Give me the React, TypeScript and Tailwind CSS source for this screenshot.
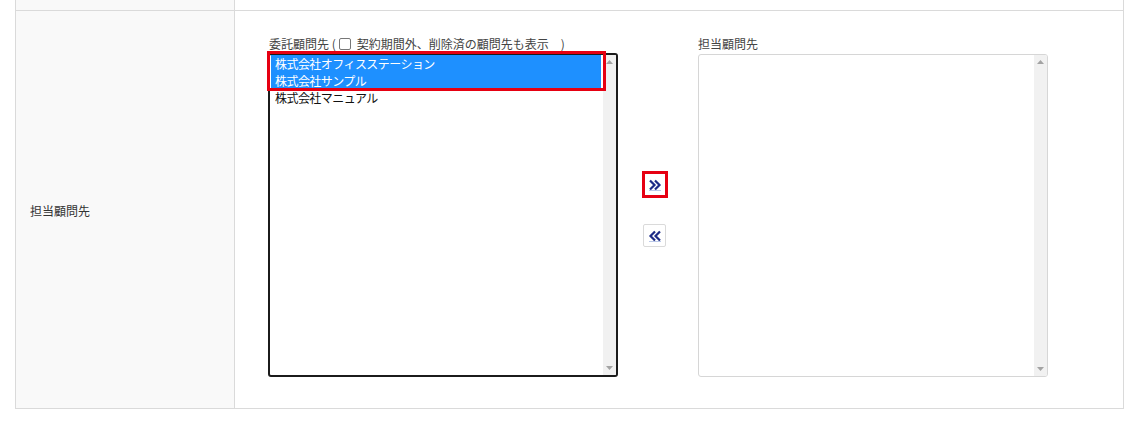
import { useState } from 'react';

const FONT = { fontFamily: '"Noto Sans CJK JP", "Noto Sans", sans-serif' };

interface Client {
  id: number;
  name: string;
}

const sourceClients: Client[] = [
  { id: 1, name: '株式会社オフィスステーション' },
  { id: 2, name: '株式会社サンプル' },
  { id: 3, name: '株式会社マニュアル' },
];

const ScrollTrack = () => (
  <div className="flex w-[13px] shrink-0 flex-col items-center justify-between bg-[#f1f1f1] py-[5px]">
    <svg width="7" height="4" viewBox="0 0 7 4">
      <path d="M0 4 L3.5 0 L7 4 Z" fill="#a3a3a3" />
    </svg>
    <svg width="7" height="4" viewBox="0 0 7 4">
      <path d="M0 0 L3.5 4 L7 0 Z" fill="#a3a3a3" />
    </svg>
  </div>
);

const Chevrons = ({ dir }: { dir: 'right' | 'left' }) => (
  <svg width="14" height="12" viewBox="0 0 14 12">
    {dir === 'right' ? (
      <path
        d="M2 1.5 L6.5 6 L2 10.5 M7 1.5 L11.5 6 L7 10.5"
        fill="none"
        stroke="#1c2a86"
        strokeWidth="2.2"
      />
    ) : (
      <path
        d="M7 1.5 L2.5 6 L7 10.5 M12 1.5 L7.5 6 L12 10.5"
        fill="none"
        stroke="#1c2a86"
        strokeWidth="2.2"
      />
    )}
    <path d="M1 11.5 H13" stroke="#8fa6dd" strokeWidth="1" opacity="0.6" />
  </svg>
);

export default function App() {
  const [selected] = useState<number[]>([1, 2]);
  const [showAll, setShowAll] = useState(false);

  return (
    <div className="min-h-[421px] w-[1142px] bg-white text-[12px] text-[#333]" style={FONT}>
      <div className="ml-[15px] w-[1109px] border-x border-b border-[#dadada]">
        {/* tail of the previous row */}
        <div className="flex h-[11px] border-b border-[#dadada]">
          <div className="w-[219px] shrink-0 border-r border-[#dadada] bg-[#f9f9f9]" />
          <div className="flex-1" />
        </div>

        <div className="flex h-[397px]">
          <div className="flex w-[219px] shrink-0 items-center border-r border-[#dadada] bg-[#f9f9f9] pl-[14px] pt-[2px] text-[12px]">
            担当顧問先
          </div>

          <div className="flex flex-1 pl-[33px] pt-[25px]">
            {/* source list */}
            <div className="flex w-[350px] flex-col">
              <label className="flex h-[16px] items-center gap-[3px] pl-[1px] text-[12px] leading-none text-[#444]">
                <span>委託顧問先 (</span>
                <input
                  type="checkbox"
                  checked={showAll}
                  onChange={(e) => setShowAll(e.target.checked)}
                  className="m-0 h-[12px] w-[12px] appearance-none rounded-[2px] border border-[#777] bg-white"
                />
                <span className="ml-[3px]">契約期間外、削除済の顧問先も表示　)</span>
              </label>
              <div className="relative mt-[1px] flex h-[324px] overflow-hidden rounded-[3px] border-2 border-[#1b1b1b]">
                <ul className="flex-1 pl-[1px] pr-[2px] pt-0">
                  {sourceClients.map((c) => {
                    const isSel = selected.includes(c.id);
                    return (
                      <li
                        key={c.id}
                        className={`flex h-[17px] items-center pl-[4px] text-[12px] tracking-[-0.55px] ${
                          isSel ? 'bg-[#1e90ff] text-white' : 'text-[#111]'
                        }`}
                      >
                        {c.name}
                      </li>
                    );
                  })}
                </ul>
                <ScrollTrack />
              </div>
              {/* highlight box from the manual */}
              <div className="pointer-events-none relative">
                <div className="absolute left-[-1px] top-[-326px] h-[40px] w-[339px] border-[3px] border-[#e60012]" />
              </div>
            </div>

            {/* move buttons */}
            <div className="flex w-[79px] flex-col items-start pl-[24px] pt-[135px]">
              <div className="border-[3px] border-[#e60012]">
                <button className="flex h-[21px] w-[20px] items-center justify-center bg-white">
                  <Chevrons dir="right" />
                </button>
              </div>
              <button className="ml-[1px] mt-[26px] flex h-[23px] w-[23px] items-center justify-center rounded-[2px] border border-[#dadada] bg-white">
                <Chevrons dir="left" />
              </button>
            </div>

            {/* assigned list */}
            <div className="flex w-[351px] flex-col pl-[1px]">
              <div className="flex h-[16px] items-center text-[12px] leading-none text-[#444]">
                担当顧問先
              </div>
              <div className="mt-[2px] flex h-[323px] overflow-hidden rounded-[3px] border border-[#d6d6d6]">
                <div className="flex-1" />
                <ScrollTrack />
              </div>
            </div>
          </div>
        </div>
      </div>
    </div>
  );
}
